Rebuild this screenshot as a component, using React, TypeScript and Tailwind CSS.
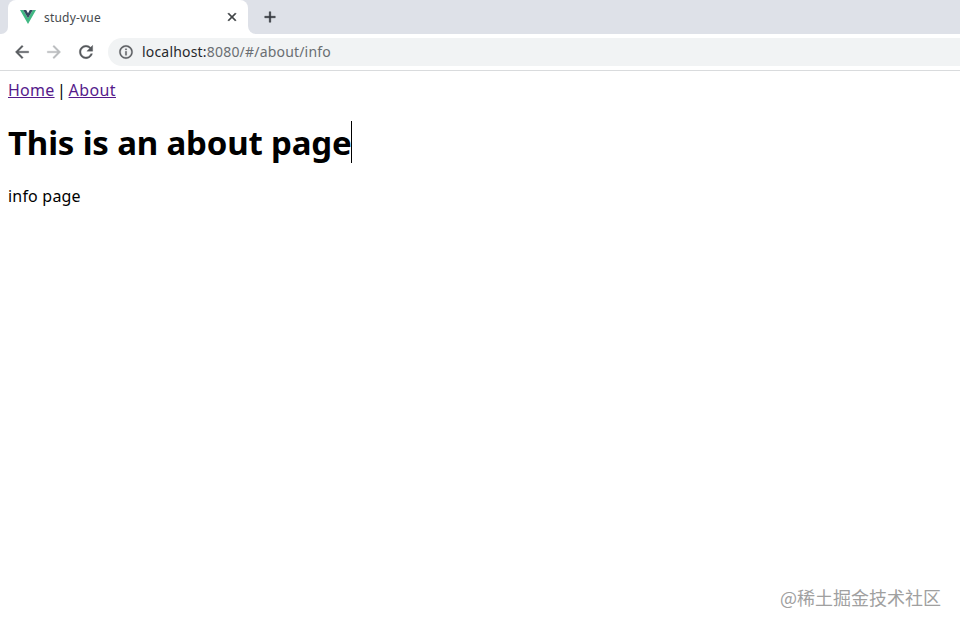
function VueLogo() {
  return (
    <svg viewBox="0 0 16 14" className="w-4 h-[14px]">
      <path d="M0 0H3.2L8 8.3L12.8 0H16L8 14Z" fill="#41b883" />
      <path d="M3.2 0H6.2L8 3.2L9.8 0H12.8L8 8.3Z" fill="#34495e" />
    </svg>
  )
}

function Icon({ d, className }: { d: string; className: string }) {
  return (
    <svg viewBox="0 0 24 24" fill="currentColor" stroke="currentColor" className={className}>
      <path d={d} />
    </svg>
  )
}

const icons = {
  back: 'M20 11H7.83l5.59-5.59L12 4l-8 8 8 8 1.41-1.41L7.83 13H20v-2z',
  forward: 'M12 4l-1.41 1.41L16.17 11H4v2h12.17l-5.58 5.59L12 20l8-8z',
  reload: 'M17.65 6.35C16.2 4.9 14.21 4 12 4c-4.42 0-7.99 3.58-7.99 8s3.57 8 7.99 8c3.73 0 6.84-2.55 7.73-6h-2.08c-.82 2.33-3.04 4-5.65 4-3.31 0-6-2.69-6-6s2.69-6 6-6c1.66 0 3.14.69 4.22 1.78L13 11h7V4l-2.35 2.35z',
  close: 'M19 6.41L17.59 5 12 10.59 6.41 5 5 6.41 10.59 12 5 17.59 6.41 19 12 13.41 17.59 19 19 17.59 13.41 12z',
  plus: 'M19 13h-6v6h-2v-6H5v-2h6V5h2v6h6v2z',
  info: 'M11 7h2v2h-2zm0 4h2v6h-2zm1-9C6.48 2 2 6.48 2 12s4.48 10 10 10 10-4.48 10-10S17.52 2 12 2zm0 18c-4.41 0-8-3.59-8-8s3.59-8 8-8 8 3.59 8 8-3.59 8-8 8z',
}

function TabBar() {
  return (
    <div className="h-[34px] flex bg-white">
      <div className="w-2 bg-[#dee1e8] rounded-br-[7px]" />
      <div className="w-[240px] bg-[#dee1e8]">
        <div className="h-full flex items-center bg-white rounded-t-[8px] pl-3 pr-[9px]">
          <VueLogo />
          <span className="ml-2 pt-0.5 flex-1 text-[12px] tracking-[0.2px] text-[#45494d]">study-vue</span>
          <Icon d={icons.close} className="w-[14px] h-[14px] text-[#3c4043] stroke-1" />
        </div>
      </div>
      <div className="flex-1 flex items-center bg-[#dee1e8] rounded-bl-[8px] pl-[13px]">
        <Icon d={icons.plus} className="w-[18px] h-[18px] text-[#33373d] stroke-[0.6]" />
      </div>
    </div>
  )
}

function AddressBar() {
  return (
    <div className="h-[37px] flex items-center border-b border-[#d9dbdd] pl-3">
      <Icon d={icons.back} className="w-5 h-5 text-[#5a5d61] stroke-[0.4]" />
      <Icon d={icons.forward} className="ml-3 w-5 h-5 text-[#babcbe] stroke-[0.4]" />
      <Icon d={icons.reload} className="ml-3 w-5 h-5 text-[#55585c] stroke-[0.4]" />
      <div className="ml-3 h-7 flex-1 flex items-center bg-[#f1f3f4] rounded-l-full pl-[10px]">
        <Icon d={icons.info} className="w-4 h-4 text-[#5a5d61] stroke-[0.4]" />
        <p className="ml-2 pb-0.5 text-[14px] tracking-[0.19px] text-[#6a6e72]">
          <span className="text-[#27292c]">localhost:</span>8080/#/about/info
        </p>
      </div>
    </div>
  )
}

export default function App() {
  return (
    <div className="relative w-full h-[628px] overflow-hidden bg-white font-['Noto_Sans','Noto_Sans_CJK_SC',sans-serif]">
      <TabBar />
      <AddressBar />

      <main className="px-2 pt-2 text-[16px] leading-[22px] text-black">
        <nav className="flex">
          <a href="#/" className="tracking-[0.25px] text-[#551a8b] underline">Home</a>
          <span className="w-[14px] text-center">|</span>
          <a href="#/about" className="tracking-[0.4px] text-[#551a8b] underline">About</a>
        </nav>
        <div className="mt-[19px] flex items-center">
          <h1 className="w-[343px] pt-0.5 text-[33px] leading-[42px] tracking-[-0.17px] font-bold whitespace-nowrap">This is an about page</h1>
          <span className="w-px h-[42px] bg-black" />
        </div>
        <div className="mt-[21px] tracking-[0.2px]">info page</div>
      </main>

      <p className="absolute left-[780px] top-[585px] text-[18px] leading-[24px] text-[#a0a0a0] whitespace-nowrap font-['Noto_Sans_CJK_SC',sans-serif]">
        @稀土掘金技术社区
      </p>
    </div>
  )
}
